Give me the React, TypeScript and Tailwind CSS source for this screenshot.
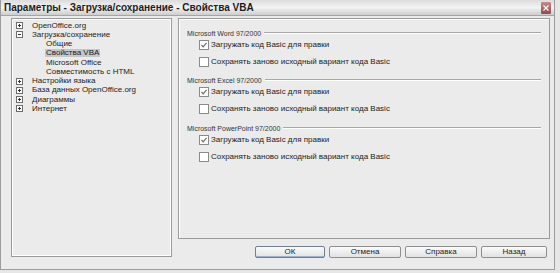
import React from 'react';

const font = { fontFamily: '"Liberation Sans", Arial, sans-serif' };

type TreeRow = { label: string; level: 0 | 1; expander?: '+' | '-'; selected?: boolean };

const tree: TreeRow[] = [
  { label: 'OpenOffice.org', level: 0, expander: '+' },
  { label: 'Загрузка/сохранение', level: 0, expander: '-' },
  { label: 'Общие', level: 1 },
  { label: 'Свойства VBA', level: 1, selected: true },
  { label: 'Microsoft Office', level: 1 },
  { label: 'Совместимость с HTML', level: 1 },
  { label: 'Настройки языка', level: 0, expander: '+' },
  { label: 'База данных OpenOffice.org', level: 0, expander: '+' },
  { label: 'Диаграммы', level: 0, expander: '+' },
  { label: 'Интернет', level: 0, expander: '+' },
];

const groups = [
  { title: 'Microsoft Word 97/2000' },
  { title: 'Microsoft Excel 97/2000' },
  { title: 'Microsoft PowerPoint 97/2000' },
];

function Expander({ sign }: { sign: '+' | '-' }) {
  return (
    <div className="w-[7px] h-[7px] border border-[#6e6e6e] bg-white flex items-center justify-center relative">
      <div className="absolute w-[3px] h-[1px] bg-[#333]" />
      {sign === '+' && <div className="absolute w-[1px] h-[3px] bg-[#333]" />}
    </div>
  );
}

function Checkbox({ checked }: { checked: boolean }) {
  return (
    <div className="w-[10px] h-[10px] border border-[#8a8a8a] bg-white flex items-center justify-center shrink-0">
      {checked && (
        <svg width="8" height="8" viewBox="0 0 8 8">
          <path d="M1.5 4 L3.2 5.8 L6.5 1.8" fill="none" stroke="#666" strokeWidth="1.1" />
        </svg>
      )}
    </div>
  );
}

function CheckRow({ checked, text }: { checked: boolean; text: string }) {
  return (
    <div className="h-[12px] flex items-center gap-[2px] pl-[12px]">
      <Checkbox checked={checked} />
      <span className="text-[8px] leading-none text-[#222]">{text}</span>
    </div>
  );
}

export default function App() {
  return (
    <div className="w-[560px] h-[273px] bg-[#e6e6e6] overflow-hidden" style={font}>
      <div className="w-[555px] h-[270px] bg-[#ebebeb] border-x border-b border-[#9c9c9c] flex flex-col">
        {/* title bar */}
        <div className="h-[16px] flex items-center justify-between pl-[3px] pr-[3px] bg-gradient-to-b from-[#dcdcdc] via-[#f3f3f3] to-[#cdcdcd] border-b border-[#a5a5a5]">
          <span className="text-[10px] font-bold text-[#1c1c1c] leading-none">
            Параметры - Загрузка/сохранение - Свойства VBA
          </span>
          <div className="w-[10px] h-[12px] rounded-[1px] bg-gradient-to-b from-[#c98a8a] to-[#8f4a4a] flex items-center justify-center">
            <svg width="6" height="6" viewBox="0 0 6 6">
              <path d="M0.5 0.5 L5.5 5.5 M5.5 0.5 L0.5 5.5" stroke="#fff" strokeWidth="1.2" />
            </svg>
          </div>
        </div>

        <div className="flex gap-[6px] pl-[10px] pt-[2px]">
          {/* tree panel */}
          <div className="w-[161px] h-[239px] border border-[#9a9a9a] shadow-[inset_1px_1px_0_#ffffff,inset_-1px_-1px_0_#ffffff] bg-[#ebebeb] pt-[2px]">
            {tree.map((row) => (
              <div key={row.label} className="h-[9.25px] flex items-center overflow-visible">
                {row.level === 0 ? (
                  <div className="flex items-center">
                    <div className="w-[20px] flex justify-start pl-[4px]">
                      {row.expander && <Expander sign={row.expander} />}
                    </div>
                    <span className="text-[8px] leading-[8px] text-[#222] whitespace-nowrap">{row.label}</span>
                  </div>
                ) : (
                  <div className="pl-[33px] flex items-center">
                    <span
                      className={
                        'text-[8px] leading-[8px] text-[#222] px-[1px] whitespace-nowrap ' +
                        (row.selected ? 'bg-[#c6c6c6]' : '')
                      }
                    >
                      {row.label}
                    </span>
                  </div>
                )}
              </div>
            ))}
          </div>

          <div className="flex flex-col">
            {/* options panel */}
            <div className="w-[372px] h-[221px] border border-[#9a9a9a] shadow-[inset_1px_1px_0_#ffffff] pl-[8px] pr-[8px] pt-[9px]">
              {groups.map((g, i) => (
                <div key={g.title} className={i === 0 ? '' : i === 1 ? 'mt-[7px]' : 'mt-[8px]'}>
                  <div className="h-[10px] flex items-center gap-[3px]">
                    <span className="text-[7px] leading-none text-[#333] whitespace-nowrap">{g.title}</span>
                    <div className="flex-1 h-[2px] border-t border-[#a8a8a8] border-b border-b-white" />
                  </div>
                  <div className="mt-[1px]">
                    <CheckRow checked text="Загружать код Basic для правки" />
                  </div>
                  <div className="mt-[5px]">
                    <CheckRow checked={false} text="Сохранять заново исходный вариант кода Basic" />
                  </div>
                </div>
              ))}
            </div>

            {/* buttons */}
            <div className="flex justify-end gap-[4px] mt-[7px] pr-[3px]">
              {[
                { t: 'ОК', w: 'w-[70px]', def: true },
                { t: 'Отмена', w: 'w-[72px]', def: false },
                { t: 'Справка', w: 'w-[72px]', def: false },
                { t: 'Назад', w: 'w-[66px]', def: false },
              ].map((b) => (
                <div
                  key={b.t}
                  className={
                    b.w +
                    ' h-[12px] rounded-[2px] border flex items-center justify-center bg-gradient-to-b from-[#fafafa] to-[#e2e2e2] ' +
                    (b.def ? 'border-[#6f7f95] shadow-[inset_0_-1px_0_#9fb0c8]' : 'border-[#8e8e8e]')
                  }
                >
                  <span className="text-[8px] leading-none text-[#222]">{b.t}</span>
                </div>
              ))}
            </div>
          </div>
        </div>
      </div>
    </div>
  );
}
